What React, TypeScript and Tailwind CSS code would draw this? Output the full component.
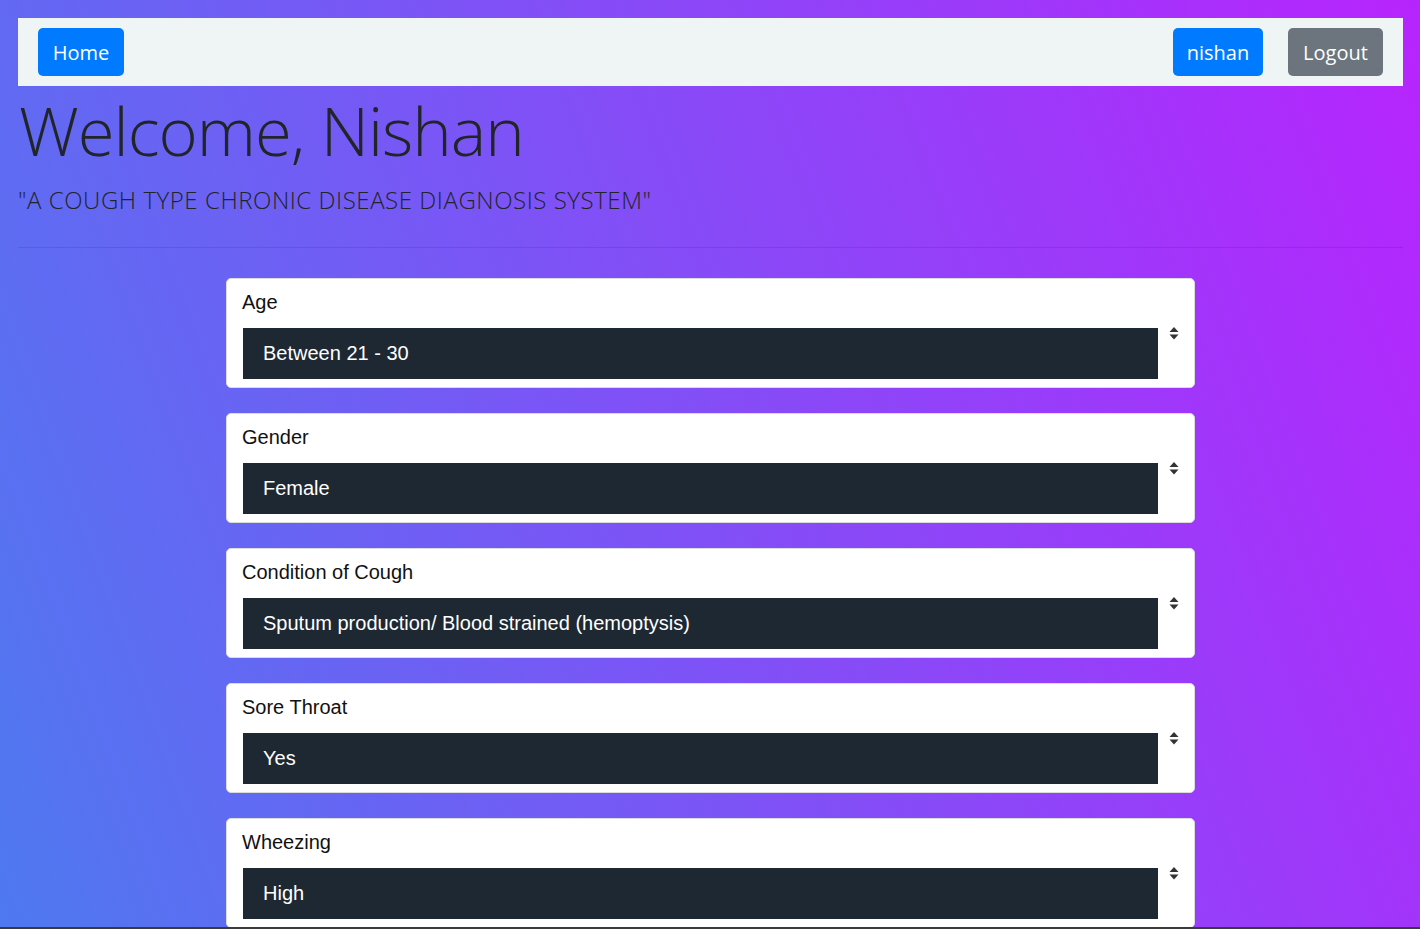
import React from "react";

const fields = [
  { label: "Age", value: "Between 21 - 30" },
  { label: "Gender", value: "Female" },
  { label: "Condition of Cough", value: "Sputum production/ Blood strained (hemoptysis)" },
  { label: "Sore Throat", value: "Yes" },
  { label: "Wheezing", value: "High" },
];

function Arrows() {
  return (
    <svg width="10" height="13" viewBox="0 0 10 13" className="block">
      <path d="M5 0 L9.5 5 L0.5 5 Z" fill="#333" />
      <path d="M0.5 7.5 L9.5 7.5 L5 12.5 Z" fill="#333" />
    </svg>
  );
}

function Card({ label, value }: { label: string; value: string }) {
  return (
    <div className="bg-white border border-[#dcdcdc] rounded-[5px] pt-[11px] pb-[8px] pl-[16px] pr-[4px]">
      <div className="h-[24px] leading-[24px] text-[20px] text-[#111] mb-[14px] -ml-[1px] font-['Liberation_Sans',Arial,sans-serif]">
        {label}
      </div>
      <div className="flex items-start">
        <div className="w-[915px] h-[51px] bg-[#1e2833] text-white text-[20px] pl-[20px] pb-[2px] flex items-center font-['Liberation_Sans',Arial,sans-serif]">
          {value}
        </div>
        <div className="flex-1 flex justify-center -mt-[1px]">
          <Arrows />
        </div>
      </div>
    </div>
  );
}

export default function App() {
  return (
    <div className="w-[1420px] h-[929px] overflow-hidden flex flex-col bg-[#333]">
      <div className="h-[927px] overflow-hidden bg-[linear-gradient(70deg,#4e79f0,#b724fd)] pl-[18px] pr-[17px] pt-[18px] font-['Open_Sans','Noto_Sans',sans-serif]">
        <nav className="h-[68px] bg-[#eff4f4] px-[20px] flex items-center justify-between">
          <button className="w-[86px] h-[48px] pt-[2px] rounded-[5px] bg-[#007bff] text-white text-[20px] leading-none">
            Home
          </button>
          <div className="flex items-center gap-[25px]">
            <button className="w-[90px] h-[48px] pt-[2px] rounded-[5px] bg-[#007bff] text-white text-[20px] leading-none">
              nishan
            </button>
            <button className="w-[95px] h-[48px] pt-[2px] rounded-[5px] bg-[#6c757d] text-white text-[20px] leading-none">
              Logout
            </button>
          </div>
        </nav>
        <h1 className="text-[67px] leading-[88px] font-light text-[#212529] pl-[1px] tracking-[-1px]">
          Welcome, Nishan
        </h1>
        <p className="mt-[11px] text-[24px] leading-[29px] font-light text-[#212529] tracking-[0.55px]">
          "A COUGH TYPE CHRONIC DISEASE DIAGNOSIS SYSTEM"
        </p>
        <hr className="mt-[33px] border-0 border-t border-black/10" />
        <div className="w-[969px] mx-auto mt-[30px] flex flex-col gap-[25px]">
          {fields.map((f) => (
            <Card key={f.label} label={f.label} value={f.value} />
          ))}
        </div>
      </div>
      <div className="h-[2px] bg-[#3a3a3a]" />
    </div>
  );
}
